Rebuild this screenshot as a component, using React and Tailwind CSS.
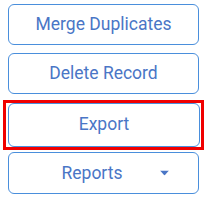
export default function App() {
  const btn =
    'flex w-full items-center justify-center rounded-[6px] border border-[#4a8fdc] bg-white text-[17.5px] text-[#4a76c6]';

  return (
    <div
      className="flex h-[200px] w-[207px] flex-col bg-white px-[8px] pt-[4px]"
      style={{ fontFamily: 'Roboto, "Liberation Sans", sans-serif' }}
    >
      <button className={`${btn} h-[41px]`}>Merge Duplicates</button>
      <button className={`${btn} mt-[8px] h-[41px]`}>Delete Record</button>
      <div className="mx-[-5px] mt-[6px] border-[3px] border-[#f00000] pl-[2px] pr-[1px]">
        <button className={`${btn} h-[44px] pb-[2px]`}>Export</button>
      </div>
      <button className={`${btn} relative mt-[2px] h-[42px]`}>
        <span className="pr-[23px]">Reports</span>
        <svg
          className="absolute right-[29px] top-1/2 -translate-y-1/2"
          width="9"
          height="5"
          viewBox="0 0 9 5"
        >
          <path d="M0 0h9L4.5 5z" fill="#4a76c6" />
        </svg>
      </button>
    </div>
  );
}
